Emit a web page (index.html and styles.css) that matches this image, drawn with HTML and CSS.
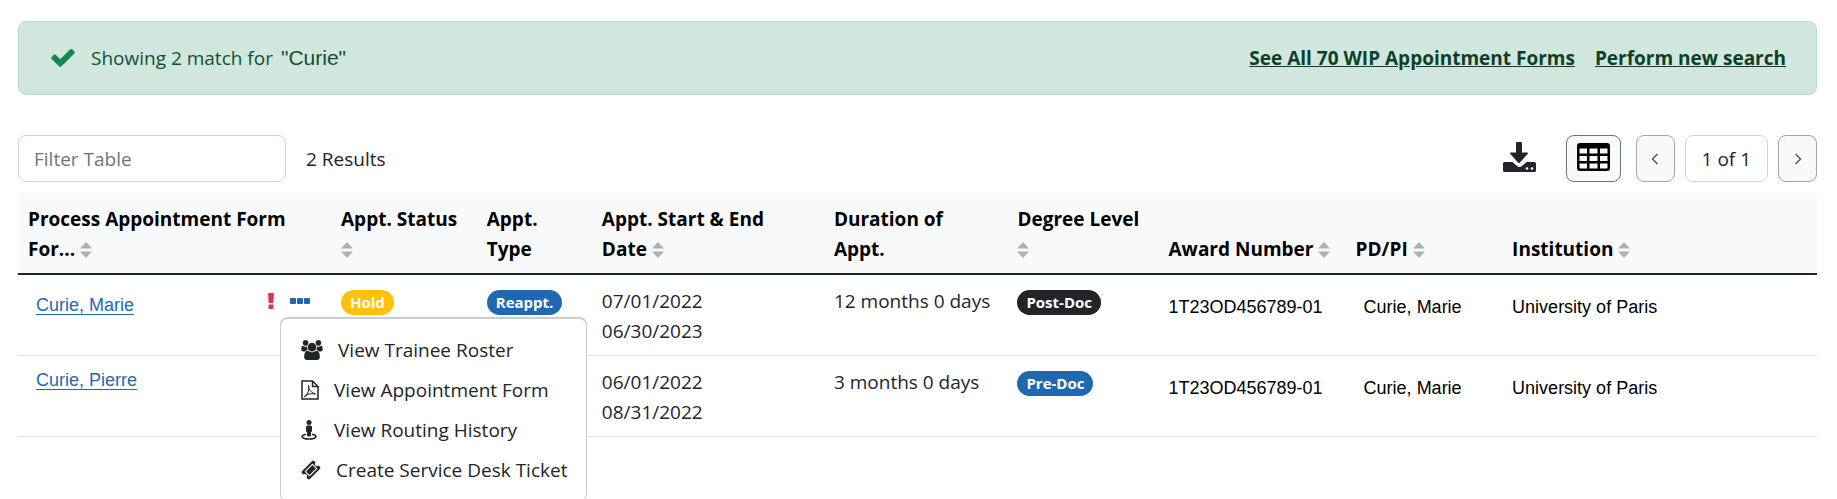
FILE: index.html
```html
<!DOCTYPE html>
<html lang="en">
<head>
<meta charset="UTF-8">
<title>Process Appointment Forms</title>
<link rel="stylesheet" href="styles.css">
</head>
<body>
<!-- shared icons -->
<svg class="sprite" aria-hidden="true">
  <symbol id="sort" viewBox="0 0 12 16">
    <path d="M6 0l6 6.500H0zM6 16l6-6.500H0z"/>
  </symbol>
</svg>

<div class="alert" role="status">
  <svg class="icon-check" viewBox="121 338 1550 1184" aria-hidden="true"><path d="M1671 566q0 40-28 68l-724 724-136 136q-28 28-68 28t-68-28l-136-136-362-362q-28-28-28-68t28-68l136-136q28-28 68-28t68 28l294 295 656-657q28-28 68-28t68 28l136 136q28 28 28 68z"/></svg>
  <span>Showing 2 match for</span>
  <span class="term">"Curie"</span>
  <div class="alert-links">
    <a href="#all">See All 70 WIP Appointment Forms</a>
    <a href="#search">Perform new search</a>
  </div>
</div>

<div class="toolbar">
  <input type="text" class="filter" placeholder="Filter Table" aria-label="Filter Table">
  <span>2 Results</span>
  <div class="tools">
    <button type="button" class="download" aria-label="Download">
      <svg width="33" height="30" viewBox="0 0 33 30" aria-hidden="true">
        <path fill="#212529" d="M13 1q0-1 1-1h4q1 0 1 1v9.500h5q1.800 0 .6 1.400l-7.600 8.500q-1 1-2 0l-7.600-8.500q-1.200-1.400.6-1.400h5z"/>
        <path fill="#212529" d="M1.500 20h8l4.500 4q2.500 2 5 0l4.500-4h8q1.500 0 1.500 1.500v7q0 1.500-1.500 1.500h-30Q0 30 0 28.500v-7Q0 20 1.500 20z"/>
        <circle fill="#fff" cx="24" cy="26.500" r="1.300"/><circle fill="#fff" cx="29" cy="26.500" r="1.300"/>
      </svg>
    </button>
    <button type="button" class="btn grid-btn" aria-label="Table view">
      <svg width="33" height="28" viewBox="0 0 33 28" aria-hidden="true">
        <path fill-rule="evenodd" d="M3 0h27q3 0 3 3v22q0 3-3 3H3q-3 0-3-3V3q0-3 3-3zM2.500 5.500v5H10v-5zM12.500 5.500v5h8v-5zM23 5.500v5h7.500v-5zM2.500 13v5H10v-5zM12.500 13v5h8v-5zM23 13v5h7.500v-5zM2.500 20.500v4q0 1 1 1H10v-5zM12.500 20.500v5h8v-5zM23 20.500v5h6.500q1 0 1-1v-4z"/>
      </svg>
    </button>
    <div class="pager">
      <button type="button" class="btn page-btn" aria-label="Previous page">
        <svg width="8" height="12" viewBox="0 0 8 12" aria-hidden="true"><path d="M6.500 1L1.500 6l5 5"/></svg>
      </button>
      <span class="page">1 of 1</span>
      <button type="button" class="btn page-btn" aria-label="Next page">
        <svg width="8" height="12" viewBox="0 0 8 12" aria-hidden="true"><path d="M1.500 1l5 5-5 5"/></svg>
      </button>
    </div>
  </div>
</div>

<table class="forms">
  <colgroup>
    <col class="c-name"><col class="c-status"><col class="c-type"><col class="c-dates"><col class="c-duration">
    <col class="c-degree"><col class="c-award"><col class="c-pd"><col class="c-inst">
  </colgroup>
  <thead>
    <tr>
      <th>Process Appointment Form<br>For... <button type="button" class="sort" aria-label="Sort by name"><svg><use href="#sort"/></svg></button></th>
      <th>Appt. Status<br><button type="button" class="sort" aria-label="Sort by status"><svg><use href="#sort"/></svg></button></th>
      <th>Appt.<br>Type</th>
      <th>Appt. Start &amp; End<br>Date <button type="button" class="sort" aria-label="Sort by date"><svg><use href="#sort"/></svg></button></th>
      <th>Duration of<br>Appt.</th>
      <th>Degree Level<br><button type="button" class="sort" aria-label="Sort by degree level"><svg><use href="#sort"/></svg></button></th>
      <th>Award Number <button type="button" class="sort" aria-label="Sort by award number"><svg><use href="#sort"/></svg></button></th>
      <th>PD/PI <button type="button" class="sort" aria-label="Sort by PD/PI"><svg><use href="#sort"/></svg></button></th>
      <th>Institution <button type="button" class="sort" aria-label="Sort by institution"><svg><use href="#sort"/></svg></button></th>
    </tr>
  </thead>
  <tbody>
    <tr>
      <td>
        <div class="name">
          <a href="#marie">Curie, Marie</a>
          <svg class="warn" viewBox="0 0 6 16" role="img" aria-label="Attention"><path d="M1 0h4q1 0 .9 1L5.400 9.500q0 .5-.5.500H1.100q-.5 0-.5-.5L.1 1Q0 0 1 0zM1 11.500h4q.5 0 .5.500v3.500q0 .5-.5.500H1q-.5 0-.5-.5V12q0-.5.5-.5z"/></svg>
          <div class="dropdown">
            <button type="button" class="more" aria-label="Actions" aria-expanded="true">
              <svg width="20" height="6" viewBox="0 0 20 6" aria-hidden="true"><rect width="6" height="6" rx="1"/><rect x="7" width="6" height="6" rx="1"/><rect x="14" width="6" height="6" rx="1"/></svg>
            </button>
            <div class="menu">
              <a href="#roster">
                <svg width="22" height="20" viewBox="64 0 1920 1792" aria-hidden="true"><path d="M657 896q-162 5-265 128h-134q-82 0-138-40.500t-56-118.500q0-353 124-353 6 0 43.500 21t97.500 42.500 119 21.500q67 0 133-23-5 37-5 66 0 139 81 256zm1071 637q0 120-73 189.500t-194 69.500h-874q-121 0-194-69.500t-73-189.500q0-53 3.500-103.500t14-109 26.500-108.500 43-97.500 62-81 85.500-53.500 111.500-20q10 0 43 21.500t73 48 107 48 135 21.500 135-21.500 107-48 73-48 43-21.500q61 0 111.500 20t85.500 53.500 62 81 43 97.500 26.500 108.500 14 109 3.500 103.500zm-1024-1277q0 106-75 181t-181 75-181-75-75-181 75-181 181-75 181 75 75 181zm704 384q0 159-112.500 271.500t-271.500 112.500-271.500-112.500-112.500-271.500 112.500-271.500 271.500-112.500 271.500 112.500 112.500 271.500zm576 225q0 78-56 118.500t-138 40.500h-134q-103-123-265-128 81-117 81-256 0-29-5-66 66 23 133 23 59 0 119-21.500t97.500-42.500 43.500-21q124 0 124 353zm-128-609q0 106-75 181t-181 75-181-75-75-181 75-181 181-75 181 75 75 181z"/></svg>
                View Trainee Roster
              </a>
              <a href="#form">
                <svg width="18" height="20" viewBox="0 0 18 20" aria-hidden="true"><g fill="none" stroke="#212529"><path stroke-width="1.500" d="M1 1h10.500L17 6.500V19H1zM11.500 1v5.500H17"/><path d="M7.500 5.500q0 3.500 2 5.500t5 3q-4-.8-7.500.2T3.500 17Q6 15 7.200 12T7.500 5.500z"/></g></svg>
                View Appointment Form
              </a>
              <a href="#history">
                <svg width="18" height="20" viewBox="0 0 18 20" aria-hidden="true"><circle cx="8" cy="2.500" r="2.500"/><path d="M6.500 5.500h3q1.500 0 1.500 1.500v4q0 1-1 1v3.500q0 1-1 1H7q-1 0-1-1V12q-1 0-1-1V7q0-1.500 1.500-1.500z"/><path fill="none" stroke="#212529" stroke-width="1.500" d="M5 14.200Q1 15 1 16.500 1.500 19 8 19t7-2.500Q15 15 11 14.200"/></svg>
                View Routing History
              </a>
              <a href="#ticket">
                <svg width="20" height="20" viewBox="0 0 1792 1792" aria-hidden="true"><path d="M1024 452l316 316-572 572-316-316zm-211 979l618-618q19-19 19-45t-19-45l-362-362q-18-18-45-18t-45 18l-618 618q-19 19-19 45t19 45l362 362q18 18 45 18t45-18zm889-637l-907 908q-37 37-90.500 37t-90.500-37l-126-126q56-56 56-136t-56-136-136-56-136 56l-125-126q-37-37-37-90.500t37-90.500l907-906q37-37 90.500-37t90.500 37l125 125q-56 56-56 136t56 136 136 56 136-56l126 125q37 37 37 90.500t-37 90.500z"/></svg>
                Create Service Desk Ticket
              </a>
            </div>
          </div>
        </div>
      </td>
      <td><span class="badge hold">Hold</span></td>
      <td><span class="badge blue">Reappt.</span></td>
      <td>07/01/2022<br>06/30/2023</td>
      <td>12 months 0 days</td>
      <td><span class="badge dark">Post-Doc</span></td>
      <td class="plain">1T23OD456789-01</td>
      <td class="plain pd">Curie, Marie</td>
      <td class="plain">University of Paris</td>
    </tr>
    <tr>
      <td>
        <div class="name">
          <a href="#pierre">Curie, Pierre</a>
        </div>
      </td>
      <td></td>
      <td></td>
      <td>06/01/2022<br>08/31/2022</td>
      <td>3 months 0 days</td>
      <td><span class="badge blue">Pre-Doc</span></td>
      <td class="plain">1T23OD456789-01</td>
      <td class="plain pd">Curie, Marie</td>
      <td class="plain">University of Paris</td>
    </tr>
  </tbody>
</table>
</body>
</html>
```

FILE: styles.css
```css
* {
  box-sizing: border-box;
}
body {
  min-height: 100vh;
  margin: 0;
  padding: 21px 20px 0 18px;
  font-family: "Open Sans", "Noto Sans", sans-serif;
  font-size: 19px;
  line-height: 30px;
  color: #212529;
  background: #fff;
}
button {
  font: inherit;
  padding: 0;
  border: 0;
  background: none;
  cursor: pointer;
}
svg {
  display: block;
}
.sprite {
  display: none;
}

/* search result message */
.alert {
  display: flex;
  align-items: center;
  height: 74px;
  padding: 0 30px 0 32px;
  border: 1px solid #badbcc;
  border-radius: 8px;
  background: #d1e7dd;
  color: #0f5132;
}
.icon-check {
  width: 24px;
  height: 18px;
  margin-right: 16px;
  fill: #198754;
}
.term {
  margin-left: 8px;
  font-family: "Liberation Sans", Arial, sans-serif;
  font-size: 21px;
}
.alert-links {
  display: flex;
  gap: 20px;
  margin-left: auto;
}
.alert-links a {
  color: #0c4128;
  font-weight: 700;
}

/* filter and paging */
.toolbar {
  display: flex;
  align-items: center;
  gap: 20px;
  margin: 40px 0 11px;
}
.filter {
  width: 268px;
  height: 47px;
  padding: 0 15px;
  border: 1px solid #ced4da;
  border-radius: 8px;
  font: inherit;
  color: inherit;
}
.filter::placeholder {
  color: #6c757d;
  opacity: 1;
}
.tools {
  display: flex;
  align-items: center;
  margin-left: auto;
}
.download {
  margin-right: 30px;
  padding-bottom: 4px;
}
.btn {
  display: flex;
  align-items: center;
  justify-content: center;
  height: 47px;
  border: 1px solid #9fa5aa;
  border-radius: 8px;
  background: #f8f9fa;
}
.grid-btn {
  width: 55px;
  padding-bottom: 3px;
  border-color: #6c757d;
}
.pager {
  display: flex;
  gap: 10px;
  margin-left: 15px;
}
.page-btn {
  width: 39px;
}
.page-btn path {
  fill: none;
  stroke: #555;
  stroke-width: 1.500;
}
.page {
  height: 47px;
  padding: 8px 16px;
  border: 1px solid #ced4da;
  border-radius: 8px;
}

/* results */
.forms {
  width: 100%;
  table-layout: fixed;
  border-collapse: collapse;
}
.c-name { width: 17.4%; }
.c-status { width: 8.1%; }
.c-type { width: 6.4%; }
.c-dates { width: 12.9%; }
.c-duration { width: 10.2%; }
.c-degree { width: 8.4%; }
.c-award { width: 10.4%; }
.c-pd { width: 8.7%; }
th, td {
  padding: 11px 10px 9px;
  text-align: left;
  white-space: nowrap;
}
th {
  vertical-align: bottom;
  font-weight: 700;
  color: #000;
  background: #f8f9fa;
  border-bottom: 2px solid #212529;
}
td {
  vertical-align: top;
  border-bottom: 1px solid #dee2e6;
}
.sort {
  display: inline-block;
  vertical-align: -2px;
}
.sort svg {
  width: 12px;
  height: 16px;
  fill: #b0b0b0;
}
.name {
  display: flex;
  align-items: flex-end;
  padding: 0 11px 0 8px;
}
.name > a {
  margin-right: auto;
  padding-top: 2px;
  font-family: "Liberation Sans", Arial, sans-serif;
  font-size: 18px;
  line-height: 22px;
  color: #1f69b3;
  text-underline-offset: 3px;
}
.warn {
  align-self: center;
  width: 6px;
  height: 16px;
  margin-right: 16px;
  fill: #dc3545;
}
.dropdown {
  position: relative;
}
.more {
  display: flex;
  align-items: center;
  height: 30px;
}
.more svg {
  fill: #1f69b3;
}
.menu {
  position: absolute;
  top: 32px;
  left: -10px;
  z-index: 1;
  padding: 11px 19px 11px 20px;
  border: 1px solid #ccc;
  border-radius: 8px;
  background: #fff;
  box-shadow: 0 -1px 0 #ccc;
}
.menu a {
  display: flex;
  align-items: center;
  gap: 15px;
  height: 40px;
  color: #212529;
  text-decoration: none;
}
.menu svg {
  fill: #212529;
}
.badge {
  display: inline-block;
  padding: 0 9px;
  border-radius: 13px;
  font-size: 15px;
  line-height: 25px;
  font-weight: 700;
  color: #fff;
}
.hold {
  background: #ffc107;
}
.blue {
  background: #1f69b3;
}
.dark {
  background: #212529;
}
td.plain {
  padding-top: 17px;
  font-family: "Liberation Sans", Arial, sans-serif;
  font-size: 18px;
  color: #000;
}
td.pd {
  padding-left: 18px;
}
```
